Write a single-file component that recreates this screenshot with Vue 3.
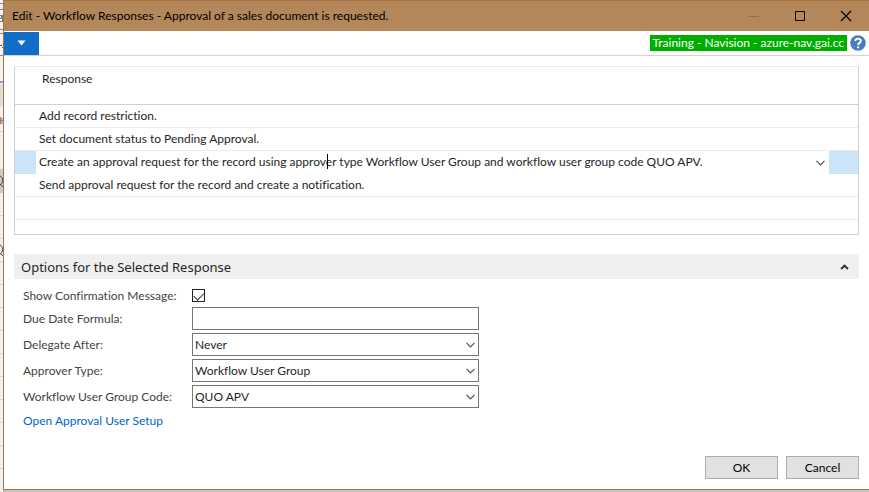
<script setup>
import { ref } from 'vue'

const before = ['Add record restriction.', 'Set document status to Pending Approval.']
const selected = ref(
  'Create an approval request for the record using approver type Workflow User Group and workflow user group code QUO APV.'
)
const after = ['Send approval request for the record and create a notification.', '']

const confirm = ref(true)
const formula = ref('')
const choices = ref([
  { id: 'delegate', label: 'Delegate After:', value: 'Never', options: ['Never', '1 day', '2 days', '5 days'] },
  { id: 'approver', label: 'Approver Type:', value: 'Workflow User Group', options: ['Workflow User Group', 'Approver', 'Salesperson/Purchaser'] },
  { id: 'group', label: 'Workflow User Group Code:', value: 'QUO APV', options: ['QUO APV'] }
])
const open = ref(true)
</script>

<template>
  <div class="desktop">
    <svg class="behind" width="3" height="492" aria-hidden="true">
      <rect width="3" height="84" fill="#f4f4f4" />
      <rect y="84" width="3" height="22" fill="#dcdcdc" />
      <rect y="106" width="3" height="386" fill="#f0f0ef" />
      <rect y="169" width="3" height="24" fill="#cbcbcb" />
      <path d="M0 3.5H3M0 9.5H3M0 29.5H3M0 33.5H3M0 55.5H3" stroke="#8c8c8c" />
      <path d="M0 45.5H2M2 47.5H3" stroke="#555" />
      <path d="M0 82H3" stroke="#7f9fe8" stroke-width="2" />
      <path
        d="M0 131.5H3M0 215.5H3M0 238.5H3M0 261.5H3M0 284.5H3M0 307.5H3M0 330.5H3M0 353.5H3M0 376.5H3M0 399.5H3M0 422.5H3M0 445.5H3M0 468.5H3"
        stroke="#d4d4d4"
      />
      <path d="M0 15.5H1.5V18.5H0M0 21.5H2M2.5 15V22" stroke="#777" fill="none" />
      <path d="M0.5 117V124M2 118V124M1 120.5H3" stroke="#9a7a74" fill="none" />
      <path d="M0 176C3.4 177 3.4 184 0 185M0 184L3 187M0 245C3.4 246 3.4 253 0 254M0 253L3 256" stroke="#2c4a6c" fill="none" />
    </svg>

    <main class="window">
      <header class="titlebar">
        <h1>Edit - Workflow Responses - Approval of a sales document is requested.</h1>
        <div class="controls">
          <button type="button" aria-label="Minimize" disabled>
            <svg width="12" height="12"><path d="M1 6.5H11" stroke="#8f6a46" /></svg>
          </button>
          <button type="button" aria-label="Maximize">
            <svg width="12" height="12"><path d="M1.5 1.5H10.5V10.5H1.5Z" stroke="#000" fill="none" /></svg>
          </button>
          <button type="button" aria-label="Close">
            <svg width="12" height="12"><path d="M1 1L11 11M11 1L1 11" stroke="#000" stroke-width="1.2" /></svg>
          </button>
        </div>
      </header>

      <div class="ribbon">
        <button type="button" class="app-menu" aria-label="Application menu">
          <svg width="9" height="6"><path d="M0.5 0.5H8.5L4.5 5.5Z" fill="#fff" /></svg>
        </button>
        <div class="status">
          <span class="server">Training - Navision - azure-nav.gai.cc</span>
          <button type="button" class="help" aria-label="Help">
            <svg width="16" height="16" viewBox="0 0 16 16">
              <circle cx="8" cy="8" r="7.8" fill="#4a7dba" />
              <path d="M5.3 6.1C5.3 2.8 10.8 2.8 10.8 6C10.8 8 8.1 7.8 8.1 10" stroke="#fff" stroke-width="1.9" fill="none" />
              <rect x="7.1" y="11.3" width="2" height="2" fill="#fff" />
            </svg>
          </button>
        </div>
      </div>

      <div class="content">
        <div class="grid-box">
          <table>
            <colgroup>
              <col class="marker" />
              <col />
              <col class="tail" />
            </colgroup>
            <thead>
              <tr><td></td><th scope="col">Response</th><td></td></tr>
            </thead>
            <tbody>
              <tr v-for="text in before" :key="text"><td></td><td class="text">{{ text }}</td><td></td></tr>
              <tr class="selected">
                <td></td>
                <td class="edit">
                  <div class="editor">
                    <input v-model="selected" type="text" aria-label="Response" />
                    <i class="caret"></i>
                    <button type="button" aria-label="Choose response">
                      <svg width="9" height="6"><path d="M0.5 0.8L4.5 4.8L8.5 0.8" stroke="#555" stroke-width="1.2" fill="none" /></svg>
                    </button>
                  </div>
                </td>
                <td></td>
              </tr>
              <tr v-for="text in after" :key="text"><td></td><td class="text">{{ text }}</td><td></td></tr>
            </tbody>
          </table>
        </div>

        <section>
          <h2>
            <button type="button" :aria-expanded="open" @click="open = !open">
              <span>Options for the Selected Response</span>
              <svg width="9" height="6"><path d="M1 5L4.5 1.7L8 5" stroke="#333" stroke-width="2" fill="none" /></svg>
            </button>
          </h2>
          <div v-if="open" class="form">
            <label for="confirm">Show Confirmation Message:</label>
            <input id="confirm" v-model="confirm" type="checkbox" />
            <label for="formula">Due Date Formula:</label>
            <input id="formula" v-model="formula" class="field" type="text" />
            <template v-for="c in choices" :key="c.id">
              <label :for="c.id">{{ c.label }}</label>
              <div class="pick">
                <select :id="c.id" v-model="c.value" class="field">
                  <option v-for="o in c.options" :key="o">{{ o }}</option>
                </select>
                <svg width="9" height="6" aria-hidden="true"><path d="M0.5 0.8L4.5 4.8L8.5 0.8" stroke="#555" stroke-width="1.2" fill="none" /></svg>
              </div>
            </template>
            <a href="#">Open Approval User Setup</a>
          </div>
        </section>

        <footer>
          <button type="button">OK</button>
          <button type="button">Cancel</button>
        </footer>
      </div>
    </main>
  </div>
</template>

<style>
body {
  background: #c3c3c3;
}
</style>

<style scoped>
.desktop {
  display: flex;
  min-height: 100vh;
  box-sizing: border-box;
  padding-bottom: 2px;
  overflow: hidden;
  font: 12px/16px Lato, sans-serif;
  font-variant-ligatures: none;
  color: #262626;
}
.desktop * {
  box-sizing: border-box;
}
button,
input,
select {
  font: inherit;
  font-variant-ligatures: none;
  color: inherit;
  margin: 0;
  padding: 0;
  border: 0;
  border-radius: 0;
  background: none;
}
svg {
  display: block;
}
.behind {
  flex: none;
  align-self: flex-start;
  margin-bottom: -2px;
}
.window {
  flex: 1;
  min-width: 0;
  display: flex;
  flex-direction: column;
  background: #fff;
  border: 1px solid #a9753f;
  border-right: 0;
}
.titlebar {
  height: 30px;
  display: flex;
  align-items: center;
  justify-content: space-between;
  background: #b4875b;
  color: #000;
}
h1 {
  margin: 0;
  padding-left: 8px;
  font-size: 12px;
  font-weight: 400;
}
.controls {
  display: flex;
}
.controls button {
  width: 46px;
  height: 28px;
  display: grid;
  place-items: center;
}
.ribbon {
  height: 25px;
  display: flex;
  justify-content: space-between;
  align-items: center;
  border-bottom: 1px solid #d3d3d3;
}
.app-menu {
  width: 35px;
  height: 23px;
  display: grid;
  place-items: center;
  background: #106ec8;
}
.status {
  display: flex;
  align-items: center;
  gap: 3px;
  padding-right: 3px;
}
.server {
  padding: 0 3px;
  background: #00ae00;
  color: #fff;
}
.content {
  flex: 1;
  display: flex;
  flex-direction: column;
  padding: 10px;
}
.grid-box {
  height: 169px;
  border: 1px solid #d0d0d0;
  border-top-color: #ececec;
}
table {
  width: 100%;
  table-layout: fixed;
  border-collapse: separate;
  border-spacing: 0;
}
.marker {
  width: 21px;
}
.tail {
  width: 29px;
}
td,
th {
  height: 23px;
  padding: 0;
  border-bottom: 1px solid #ececec;
  text-align: left;
  font-weight: 400;
}
thead td,
thead th {
  height: 38px;
  padding-bottom: 14px;
  border-bottom-color: #d0d0d0;
}
th {
  padding-left: 6px;
}
.text {
  padding-left: 3px;
}
.selected td {
  border-bottom: 0;
  background: #cce4f7;
}
.selected .edit {
  background: #fff;
}
.editor {
  position: relative;
  display: flex;
  height: 23px;
}
.editor input {
  flex: 1;
  min-width: 0;
  padding: 0 0 1px 3px;
  outline: none;
}
.editor button {
  width: 18px;
  display: grid;
  place-items: center;
}
.caret {
  position: absolute;
  left: 291px;
  top: 3px;
  width: 1px;
  height: 15px;
  background: #000;
}
h2 {
  margin: 19px 0 8px;
}
h2 button {
  width: 100%;
  height: 25px;
  display: flex;
  align-items: center;
  justify-content: space-between;
  padding: 0 10px 0 7px;
  background: #efefef;
  font-family: "Noto Sans", sans-serif;
  font-size: 13px;
  font-weight: 400;
}
.form {
  display: grid;
  grid-template-columns: 169px minmax(0, 287px);
  grid-template-rows: 17px;
  row-gap: 3px;
  align-items: center;
  padding-left: 9px;
}
label {
  color: #444;
}
input[type="checkbox"] {
  appearance: none;
  width: 13px;
  height: 13px;
  border: 1px solid #222;
}
input[type="checkbox"]:checked::after {
  content: "";
  display: block;
  width: 5px;
  height: 9px;
  margin-left: 3px;
  border: solid #333;
  border-width: 0 1px 1px 0;
  transform: rotate(45deg);
}
.field {
  width: 100%;
  height: 23px;
  padding: 0 2px;
  border: 1px solid #767676;
  background: #fff;
}
select.field {
  appearance: none;
}
.pick {
  display: grid;
  align-items: center;
}
.pick > * {
  grid-area: 1 / 1;
}
.pick svg {
  justify-self: end;
  margin-right: 4px;
  pointer-events: none;
}
.form a {
  grid-column: 1 / -1;
  margin-top: 2px;
  color: #0066cc;
  text-decoration: none;
}
footer {
  margin-top: auto;
  display: flex;
  justify-content: flex-end;
  gap: 8px;
}
footer button {
  width: 73px;
  height: 23px;
  border: 1px solid #adadad;
  background: #e1e1e1;
  color: #000;
}
</style>
